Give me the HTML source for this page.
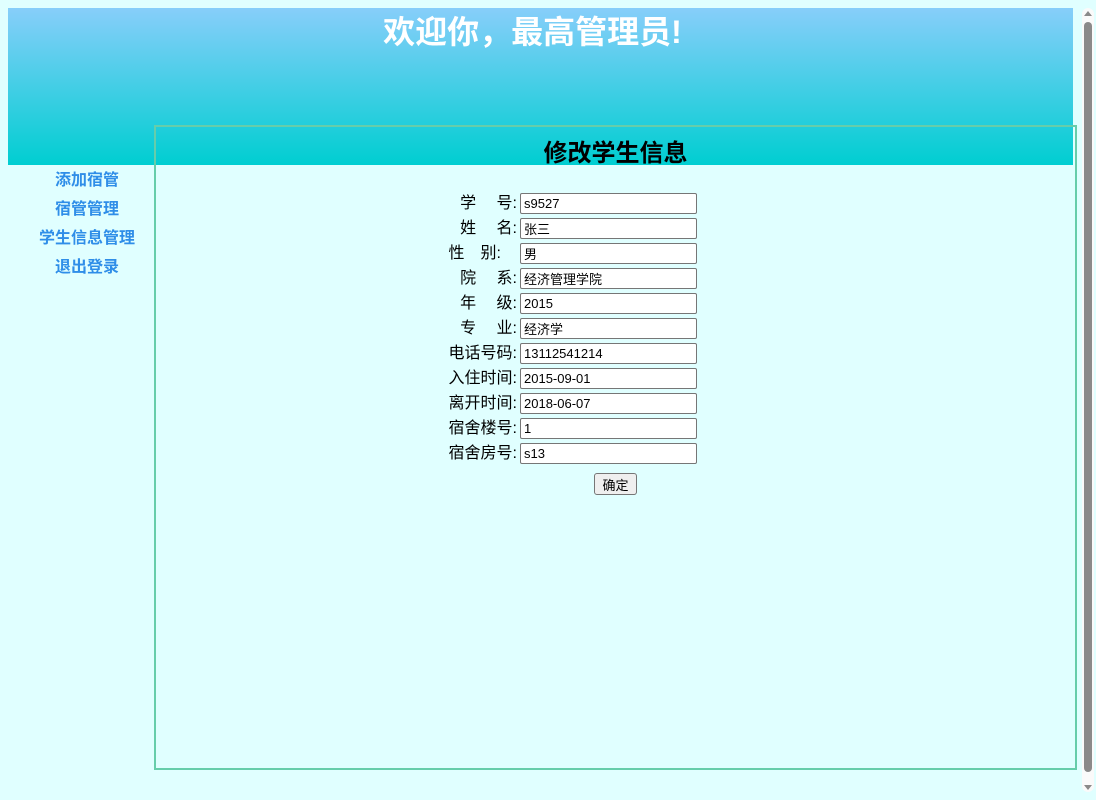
<!DOCTYPE html>
<html><head><meta charset="utf-8"><style>
html,body{margin:0;padding:0;width:1096px;height:800px;overflow:hidden;background:#e0ffff;}
body{font-family:"Liberation Sans","Noto Sans CJK SC",sans-serif;position:relative;}
#hd{position:absolute;left:8px;top:8px;width:1065px;height:157px;background:linear-gradient(#87cefa,#00ced1);}
#hd h1{margin:0;position:absolute;left:0;width:1049px;text-align:center;top:2px;font-size:32px;line-height:44px;color:#fff;font-weight:bold;}
#nav{position:absolute;left:8px;top:166px;width:158px;text-align:center;}
#nav a{display:block;color:#2f8ee8;font-weight:bold;font-size:16px;line-height:29px;text-decoration:none;}
#box{position:absolute;left:154px;top:125px;width:919px;height:641px;border:2px solid #66cdaa;}
#box h2{margin:0;position:absolute;left:0;width:919px;text-align:center;top:11px;font-size:24px;line-height:32px;color:#000;}
.row{position:absolute;left:0;width:600px;height:21px;font-size:16px;color:#000;}
.lab{position:absolute;left:201px;width:160px;top:0;text-align:right;line-height:21px;white-space:pre;}
.row input{position:absolute;left:364px;top:0;width:177px;height:21px;box-sizing:border-box;border:1px solid #767676;border-radius:2px;padding:1px 3px;font-size:13px;font-family:"Liberation Sans","Noto Sans CJK SC",sans-serif;background:#fff;margin:0;}
#btn{position:absolute;left:438px;top:346px;width:43px;height:22px;font-size:13px;border:1px solid #767676;border-radius:3px;background:#efefef;padding:0;font-family:"Liberation Sans","Noto Sans CJK SC",sans-serif;}
#sb{position:absolute;left:1082px;top:8px;width:12px;height:784px;background:#fafafa;border-radius:6px;}
#thumb{position:absolute;left:1084px;top:22px;width:8px;height:750px;background:#8a8a8a;border-radius:4px;}
.ar{position:absolute;left:1084px;width:0;height:0;border-left:4px solid transparent;border-right:4px solid transparent;}
</style></head><body>
<div id="hd"><h1>欢迎你，最高管理员!</h1></div>
<div id="nav"><a>添加宿管</a><a>宿管管理</a><a>学生信息管理</a><a>退出登录</a></div>
<div id="box">
<h2>修改学生信息</h2>
<div class="row" style="top:66px"><span class="lab">学　 号:</span><input value="s9527"></div>
<div class="row" style="top:91px"><span class="lab">姓　 名:</span><input value="张三"></div>
<div class="row" style="top:116px"><span class="lab">性　别:　</span><input value="男"></div>
<div class="row" style="top:141px"><span class="lab">院　 系:</span><input value="经济管理学院"></div>
<div class="row" style="top:166px"><span class="lab">年　 级:</span><input value="2015"></div>
<div class="row" style="top:191px"><span class="lab">专　 业:</span><input value="经济学"></div>
<div class="row" style="top:216px"><span class="lab">电话号码:</span><input value="13112541214"></div>
<div class="row" style="top:241px"><span class="lab">入住时间:</span><input value="2015-09-01"></div>
<div class="row" style="top:266px"><span class="lab">离开时间:</span><input value="2018-06-07"></div>
<div class="row" style="top:291px"><span class="lab">宿舍楼号:</span><input value="1"></div>
<div class="row" style="top:316px"><span class="lab">宿舍房号:</span><input value="s13"></div>
<button id="btn">确定</button>
</div>
<div id="sb"></div><div id="thumb"></div>
<div class="ar" style="top:11px;border-bottom:5px solid #8a8a8a"></div>
<div class="ar" style="top:785px;border-top:5px solid #8a8a8a"></div>
</body></html>
